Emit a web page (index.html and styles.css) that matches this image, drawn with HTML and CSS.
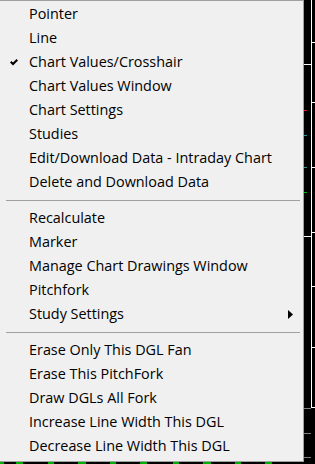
FILE: index.html
```html
<!DOCTYPE html>
<html lang="en">
<head>
    <meta charset="UTF-8">
    <meta name="viewport" content="width=device-width, initial-scale=1.0">
    <title>Chart Menu</title>
    <link rel="stylesheet" href="styles.css">
</head>
<body>
    <div class="screen">
        <div class="top">
            <ul class="menu">
                <li class="item">Pointer</li>
                <li class="item">Line</li>
                <li class="item checked">
                    <svg class="check" width="8" height="7" viewBox="0 0 8 7"><path d="M0 3.5 L1.5 2 L3 3.5 L6.5 0 L8 1.5 L3 6.5 Z" fill="#000"/></svg>
                    Chart Values/Crosshair
                </li>
                <li class="item">Chart Values Window</li>
                <li class="item">Chart Settings</li>
                <li class="item">Studies</li>
                <li class="item">Edit/Download Data - Intraday Chart</li>
                <li class="item">Delete and Download Data</li>
                <li class="sep"></li>
                <li class="item">Recalculate</li>
                <li class="item">Marker</li>
                <li class="item">Manage Chart Drawings Window</li>
                <li class="item">Pitchfork</li>
                <li class="item has-sub">
                    Study Settings
                    <svg class="arrow" width="5" height="9" viewBox="0 0 5 9"><path d="M0 0 L5 4.5 L0 9 Z" fill="#000"/></svg>
                </li>
                <li class="sep"></li>
                <li class="item">Erase Only This DGL Fan</li>
                <li class="item">Erase This PitchFork</li>
                <li class="item">Draw DGLs All Fork</li>
                <li class="item">Increase Line Width This DGL</li>
                <li class="item">Decrease Line Width This DGL</li>
            </ul>
            <div class="chart-edge">
                <div class="axis"></div>
                <span class="tick right" style="top: 42px"></span>
                <span class="tick left" style="top: 64px"></span>
                <span class="tick right" style="top: 102px"></span>
                <span class="mark red" style="top: 110px"></span>
                <span class="mark cyan" style="top: 135px"></span>
                <span class="mark teal" style="top: 167px"></span>
                <span class="tick right" style="top: 167px"></span>
                <span class="mark green" style="top: 192px"></span>
                <span class="tick right" style="top: 232px"></span>
                <span class="tick left" style="top: 236px"></span>
                <span class="tick right" style="top: 286px"></span>
                <span class="tick right" style="top: 347px"></span>
                <span class="tick right" style="top: 407px"></span>
                <span class="tick left gray" style="top: 408px"></span>
                <span class="tick left gray" style="top: 433px"></span>
                <span class="tick left gray" style="top: 457px"></span>
            </div>
        </div>
        <div class="chart-bottom">
            <span class="bar" style="width: 4px"></span>
            <span class="gap" style="width: 12px"></span>
            <span class="bar" style="width: 7px"></span>
            <span class="gap" style="width: 25px"></span>
            <span class="bar" style="width: 6px"></span>
            <span class="gap" style="width: 24px"></span>
            <span class="bar" style="width: 8px"></span>
            <span class="gap" style="width: 24px"></span>
            <span class="bar" style="width: 6px"></span>
            <span class="gap" style="width: 24px"></span>
            <span class="bar" style="width: 7px"></span>
            <span class="gap" style="width: 26px"></span>
            <span class="bar" style="width: 6px"></span>
            <span class="gap" style="width: 24px"></span>
            <span class="bar" style="width: 8px"></span>
            <span class="gap" style="width: 24px"></span>
            <span class="bar" style="width: 6px"></span>
            <span class="gap" style="width: 24px"></span>
            <span class="bar" style="width: 7px"></span>
        </div>
    </div>
</body>
</html>
```

FILE: styles.css
```css
:root {
    --menu-bg: #f0f0f0;
    --menu-border: #a0a0a0;
    --text-color: #000000;
}
* {
    box-sizing: border-box;
    margin: 0;
    padding: 0;
}
body {
    background: #000;
    font-family: 'Open Sans', 'Noto Sans', sans-serif;
    font-size: 14.4px;
    color: var(--text-color);
    width: 315px;
    height: 464px;
    overflow: hidden;
}
.top {
    display: flex;
    height: 462px;
}
.menu {
    list-style: none;
    width: 304px;
    height: 462px;
    padding-top: 1px;
    background: var(--menu-bg);
    border-top: 1px solid var(--menu-border);
    border-right: 1px solid var(--menu-border);
    border-bottom: 1px solid var(--menu-border);
}
.item {
    position: relative;
    height: 24px;
    line-height: 24px;
    padding-left: 29px;
    white-space: nowrap;
}
.check {
    position: absolute;
    left: 10px;
    top: 9px;
}
.arrow {
    position: absolute;
    left: 288px;
    top: 8px;
}
.sep {
    height: 12px;
    padding-top: 6px;
}
.sep::before {
    content: "";
    display: block;
    margin: 0 3px 0 6px;
    height: 1px;
    background: var(--menu-border);
}
.chart-edge {
    position: relative;
    flex: 1;
    background: #000;
}
.axis {
    position: absolute;
    left: 7px;
    top: 0;
    width: 1px;
    height: 408px;
    background: #fff;
}
.tick {
    position: absolute;
    height: 1px;
    background: #fff;
}
.tick.right {
    left: 7px;
    width: 4px;
}
.tick.left {
    left: 0;
    width: 7px;
}
.tick.gray {
    background: #808080;
}
.mark {
    position: absolute;
    left: 0;
    width: 3px;
    height: 1px;
}
.mark.red { background: #e0202a; }
.mark.cyan { background: #20a0a0; }
.mark.teal { background: #30a090; }
.mark.green { background: #00c000; }
.chart-bottom {
    display: flex;
    height: 2px;
    background: #000;
}
.bar {
    height: 2px;
    background: #00b000;
}
```
